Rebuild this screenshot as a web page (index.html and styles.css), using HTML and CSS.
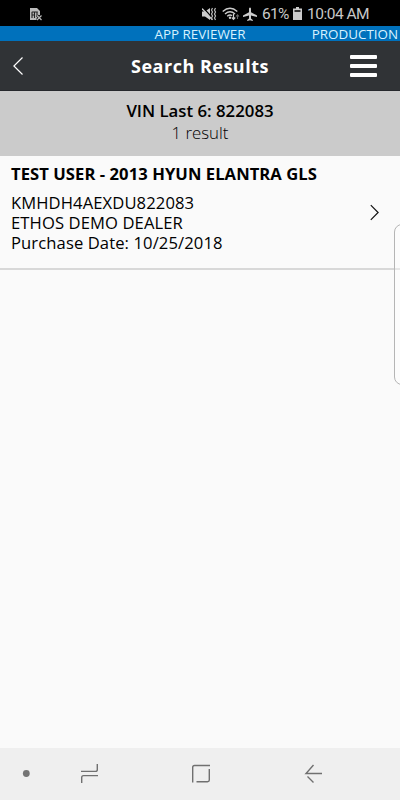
FILE: index.html
```html
<!DOCTYPE html>
<html lang="en">
<head>
<meta charset="utf-8">
<title>Search Results</title>
<link rel="stylesheet" href="styles.css">
</head>
<body>
<div class="screen">
  <div class="status">
    <svg class="sim" width="13" height="14" viewBox="0 0 13 14"><path d="M0 1h7l3 3v4l-2 1v4H0z" fill="#bbb"/><path d="M1.800 5h6M2 5v6M4.500 5v6M7 5v4M1.800 8h2.700" stroke="#222" stroke-width="1.100" fill="none"/><path d="M7 8.500l4.500 4.500M11.500 8.500L7 13" stroke="#000" stroke-width="2.500"/><path d="M7 8.500l4.500 4.500M11.500 8.500L7 13" stroke="#bbb" stroke-width="1.200"/></svg>
    <svg class="mute" width="15" height="14" viewBox="0 0 15 14"><path d="M0 4.500h3L8 1v12L3 9.500H0z" fill="#ccc"/><path d="M1 .5l9 10" stroke="#000" stroke-width="1.200"/><path d="M0 1.500l10 11" stroke="#ccc" stroke-width="1.300"/><path d="M10.500 1l-1 2 1 2-1 2 1 2-1 2 1 2M13.500 1l-1 2 1 2-1 2 1 2-1 2 1 2" stroke="#bbb" stroke-width="1.200" fill="none"/></svg>
    <svg class="wifi" width="18" height="14" viewBox="0 0 18 14"><g fill="none" stroke="#ccc" stroke-width="1.400"><path d="M.7 4.500Q8 -2 15.300 4.500M3 7Q8 2.500 13 7M5.200 9.300Q8 7 10 8.800"/><path d="M11.500 7v5M9.800 10.500l1.700 1.800 1.700-1.800" stroke-width="1.200"/><path d="M15.500 12V8M14 9.500l1.500-1.700L17 9.500" stroke="#666" stroke-width="1.100"/></g><circle cx="8" cy="10.700" r="1.200" fill="#ccc"/></svg>
    <svg class="plane" width="14" height="14" viewBox="0 0 14 14"><path d="M6 1.500Q7 -.5 8 1.500V5.200L14 8.500V10L8 8.500V11.500L9.800 13V14L7 13.200 4.200 14V13L6 11.500V8.500L0 10V8.500L6 5.200z" fill="#ccc"/></svg>
    <span class="pct">61%</span>
    <svg class="batt" width="9" height="13" viewBox="0 0 9 13"><path d="M3 0h3v1.500h3V13H0V1.500h3z" fill="#ccc"/><path d="M1.500 3h6v2h-6z" fill="#333"/></svg>
    <span class="time">10:04 AM</span>
  </div>
  <div class="env"><span></span><span class="role">APP REVIEWER</span><span class="prod">PRODUCTION</span></div>
  <header class="header">
    <svg width="12" height="20" viewBox="0 0 12 20"><path d="M10.500 1.500L1.900 10l8.600 8.500" fill="none" stroke="#fff" stroke-width="1.200"/></svg>
    <h1 class="title">Search Results</h1>
    <div class="menu"><i></i><i></i><i></i></div>
  </header>
  <section class="summary">
    <div class="vin">VIN Last 6: 822083</div>
    <div class="count">1 result</div>
  </section>
  <main class="content">
    <article class="result">
      <div>
        <h2 class="name">TEST USER - 2013 HYUN ELANTRA GLS</h2>
        <p>KMHDH4AEXDU822083</p>
        <p>ETHOS DEMO DEALER</p>
        <p>Purchase Date: 10/25/2018</p>
      </div>
      <svg class="go" width="10" height="17" viewBox="0 0 10 17"><path d="M.8 1.200l7.300 7.300L.8 15.800" fill="none" stroke="#111" stroke-width="1.200"/></svg>
    </article>
    <div class="edge"></div>
  </main>
  <nav class="nav">
    <svg width="400" height="52" viewBox="0 0 400 52"><circle cx="26.300" cy="25.500" r="3.400" fill="#747474"/><g fill="none" stroke="#707070" stroke-width="1.400"><path d="M81 23.400H95.500Q97.300 23.400 97.300 21.500V16M98 27.600H83.500Q81.700 27.600 81.700 29.500V35"/><path d="M210 17.500H194.500Q192.700 17.500 192.700 19.300V34.500M196.500 33.700H207.500Q209.300 33.700 209.300 32V21"/><path d="M322 25.500H306L313.500 17M307.500 28.500L313.500 34.500"/></g></svg>
  </nav>
</div>
</body>
</html>
```
FILE: styles.css
```css
* { box-sizing: border-box; }
body, h1, h2, p { margin: 0; }
body { width: 400px; font-family: "Open Sans", "Noto Sans", sans-serif; color: #000; }
.screen { display: flex; flex-direction: column; height: 800px; background: #fafafa; overflow: hidden; white-space: nowrap; }
svg { display: block; flex: none; }
.status { display: flex; align-items: center; height: 26px; padding-top: 1px; background: #000; color: #c8c8c8; font: 15.5px/26px Roboto, sans-serif; }
.sim { margin-left: 30px; }
.mute { margin-left: 159px; }
.wifi { margin-left: 5px; }
.plane { margin-left: 3px; }
.pct { width: 30px; margin-left: 5px; letter-spacing: -0.7px; }
.batt { margin-left: 1px; }
.time { margin-left: 5px; letter-spacing: -0.5px; }
.env { display: grid; grid-template-columns: 1fr auto 1fr; height: 15px; padding: 0 2px; background: #0071bc; color: #d8f2ff; font-size: 13.4px; line-height: 17px; }
.prod { text-align: right; }
.header { display: flex; align-items: center; justify-content: space-between; height: 50px; padding: 0 23px 0 12px; background: #303336; border-bottom: 1px solid #26282c; color: #fff; }
.title { margin-left: 26px; font-size: 18px; line-height: 24px; letter-spacing: 0.5px; }
.menu { display: grid; gap: 5px; width: 27px; }
.menu i { height: 4px; border-radius: 1px; background: #fff; }
.summary { height: 65px; padding-top: 9px; background: #cbcbcb; text-align: center; font-size: 16.8px; line-height: 22px; }
.vin { font-weight: 600; }
.count { font-weight: 300; }
.content { position: relative; flex: 1; }
.result { display: flex; justify-content: space-between; height: 114px; padding: 8px 20px 0 11px; border-bottom: 2px solid #d8d8d8; font-size: 16.6px; line-height: 20px; letter-spacing: 0.1px; }
.name { margin-bottom: 9px; font-size: 16.6px; line-height: 20px; letter-spacing: 0.06px; }
.go { margin-top: 40px; }
.edge { position: absolute; top: 68px; right: -4px; width: 10px; height: 161px; border: 1px solid #b5b5b5; border-radius: 8px 0 0 8px; background: rgba(255,255,255,.4); }
.nav { height: 52px; background: #efefef; }
```
